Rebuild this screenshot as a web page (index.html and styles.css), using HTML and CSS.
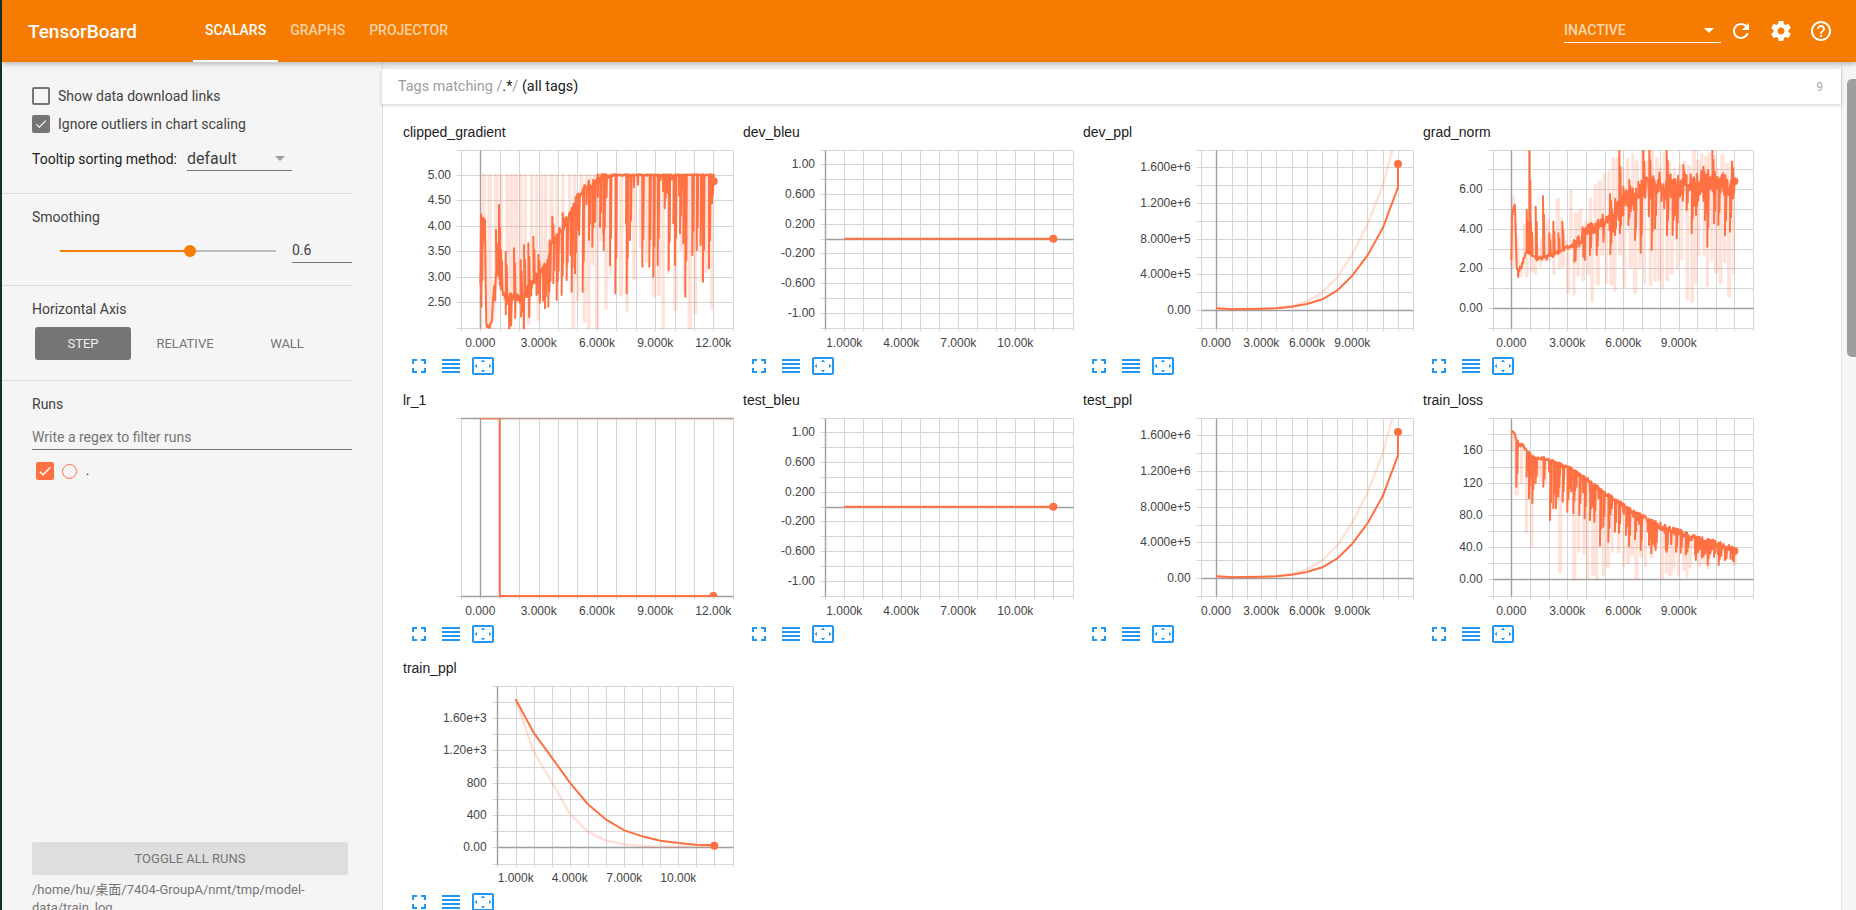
FILE: index.html
```html
<!DOCTYPE html>
<html lang="en">
<head>
<meta charset="utf-8">
<title>TensorBoard</title>
<link rel="stylesheet" href="styles.css">
</head>
<body>
<header class="topbar">
  <div class="logo">TensorBoard</div>
  <nav class="tabs">
    <div class="tab active">SCALARS</div>
    <div class="tab">GRAPHS</div>
    <div class="tab">PROJECTOR</div>
  </nav>
  <div class="topbar-right">
    <div class="inactive"><span>INACTIVE</span><i class="tri tri-white"></i></div>
    <svg class="ico-white" viewBox="0 0 24 24"><path d="M17.65 6.35C16.2 4.9 14.21 4 12 4c-4.42 0-7.99 3.58-7.99 8s3.57 8 7.99 8c3.73 0 6.84-2.55 7.73-6h-2.08c-.82 2.33-3.04 4-5.65 4-3.31 0-6-2.69-6-6s2.69-6 6-6c1.66 0 3.14.69 4.22 1.78L13 11h7V4l-2.35 2.35z"/></svg>
    <svg class="ico-white" viewBox="0 0 24 24"><path d="M19.43 12.98c.04-.32.07-.64.07-.98s-.03-.66-.07-.98l2.11-1.65c.19-.15.24-.42.12-.64l-2-3.46c-.12-.22-.39-.3-.61-.22l-2.49 1c-.52-.4-1.08-.73-1.69-.98l-.38-2.65C14.46 2.18 14.25 2 14 2h-4c-.25 0-.46.18-.49.42l-.38 2.65c-.61.25-1.17.59-1.69.98l-2.49-1c-.23-.09-.49 0-.61.22l-2 3.46c-.13.22-.07.49.12.64l2.11 1.65c-.04.32-.07.65-.07.98s.03.66.07.98l-2.11 1.65c-.19.15-.24.42-.12.64l2 3.46c.12.22.39.3.61.22l2.49-1c.52.4 1.08.73 1.69.98l.38 2.65c.03.24.24.42.49.42h4c.25 0 .46-.18.49-.42l.38-2.65c.61-.25 1.17-.59 1.69-.98l2.49 1c.23.09.49 0 .61-.22l2-3.46c.12-.22.07-.49-.12-.64l-2.11-1.65zM12 15.5c-1.93 0-3.5-1.57-3.5-3.5s1.57-3.5 3.5-3.5 3.5 1.57 3.5 3.5-1.57 3.5-3.5 3.5z"/></svg>
    <svg class="ico-white" viewBox="0 0 24 24"><path d="M11 18h2v-2h-2v2zm1-16C6.48 2 2 6.48 2 12s4.48 10 10 10 10-4.48 10-10S17.52 2 12 2zm0 18c-4.41 0-8-3.59-8-8s3.59-8 8-8 8 3.59 8 8-3.59 8-8 8zm0-14c-2.21 0-4 1.79-4 4h2c0-1.1.9-2 2-2s2 .9 2 2c0 2-3 1.75-3 5h2c0-2.25 3-2.5 3-5 0-2.21-1.79-4-4-4z"/></svg>
  </div>
</header>
<div class="layout">
  <aside class="sidebar">
    <section class="sec sec-options">
      <label class="check-row"><span class="box"></span>Show data download links</label>
      <label class="check-row"><span class="box box-on"><svg viewBox="0 0 24 24"><path d="M9 16.2L4.8 12l-1.4 1.4L9 19 21 7l-1.4-1.4L9 16.2z"/></svg></span>Ignore outliers in chart scaling</label>
      <div class="sort-row">
        <span class="sort-label">Tooltip sorting method:</span>
        <div class="sort-select"><span>default</span><i class="tri tri-grey"></i></div>
      </div>
    </section>
    <section class="sec sec-smooth">
      <div class="sec-title">Smoothing</div>
      <div class="slider-row">
        <div class="slider"><div class="slider-fill"></div><div class="slider-rest"></div><div class="slider-thumb"></div></div>
        <div class="slider-value">0.6</div>
      </div>
    </section>
    <section class="sec sec-axis">
      <div class="sec-title">Horizontal Axis</div>
      <div class="axis-btns">
        <div class="axis-btn axis-on">STEP</div>
        <div class="axis-btn">RELATIVE</div>
        <div class="axis-btn">WALL</div>
      </div>
    </section>
    <section class="sec-runs">
      <div class="sec-title">Runs</div>
      <div class="regex">Write a regex to filter runs</div>
      <div class="run-row">
        <span class="run-box"><svg viewBox="0 0 24 24"><path d="M9 16.2L4.8 12l-1.4 1.4L9 19 21 7l-1.4-1.4L9 16.2z"/></svg></span>
        <span class="run-circle"></span>
        <span class="run-name">.</span>
      </div>
    </section>
    <section class="sec-bottom">
      <div class="toggle">TOGGLE ALL RUNS</div>
      <div class="logdir">/home/hu/桌面/7404-GroupA/nmt/tmp/model-data/train_log</div>
    </section>
  </aside>
  <main class="main">
    <div class="tagbar">
      <div class="tagtext"><span class="muted">Tags matching /</span>.*<span class="muted">/</span> (all tags)</div>
      <div class="tagcount">9</div>
    </div>
    <div class="charts" id="charts"></div>
  </main>
  <div class="scrolltrack"><div class="scrollthumb"></div></div>
</div>
<script src="charts.js"></script>
</body>
</html>
```
FILE: styles.css
```css
* { box-sizing: border-box; }
html, body { margin: 0; height: 910px; overflow: hidden; }
body {
  padding-left: 2px;
  background: #12352a;
  font-family: Roboto, "Noto Sans CJK SC", sans-serif;
  font-size: 14px;
  color: #424242;
}
.topbar {
  position: relative;
  z-index: 3;
  display: flex;
  align-items: center;
  height: 62px;
  background: #f57c00;
  color: #fff;
  box-shadow: 0 2px 5px rgba(0, 0, 0, .26);
}
.logo { width: 191px; padding-left: 26px; font-size: 19px; font-weight: 500; }
.tabs { display: flex; align-self: stretch; }
.tab {
  display: flex;
  align-items: center;
  padding: 0 12px;
  border-bottom: 2px solid transparent;
  font-weight: 500;
  color: rgba(255, 255, 255, .66);
}
.tab.active { color: #fff; border-bottom-color: #fff; }
.topbar-right { display: flex; align-items: center; margin-left: auto; padding-right: 23px; }
.inactive {
  display: flex;
  align-items: center;
  justify-content: space-between;
  width: 157px;
  height: 24px;
  margin-right: 8px;
  padding: 0 7px 1px 0;
  border-bottom: 1px solid #fff;
  font-weight: 500;
  color: rgba(255, 255, 255, .7);
}
.ico-white { width: 24px; height: 24px; margin-right: 16px; fill: #fff; }
.ico-white:last-child { margin-right: 0; }
.tri { width: 0; height: 0; border-left: 5px solid transparent; border-right: 5px solid transparent; }
.tri-white { border-top: 5px solid #fff; }
.tri-grey { border-top: 5px solid #9e9e9e; }

.layout { display: flex; height: 848px; }
.sidebar {
  display: flex;
  flex-direction: column;
  flex: 0 0 380px;
  height: 848px;
  overflow: hidden;
  padding-left: 30px;
  background: #f5f5f5;
}
.sec { margin-left: -30px; margin-right: 30px; padding-left: 30px; border-bottom: 1px solid #dcdcdc; }
.sec-options { height: 132px; padding-top: 25px; }
.check-row { display: flex; align-items: center; height: 18px; margin-bottom: 10px; gap: 8px; }
.box { width: 18px; height: 18px; border: 2px solid #757575; border-radius: 2px; flex: none; }
.box-on { background: #757575; display: flex; }
.box svg { width: 14px; height: 14px; fill: #fff; }
.sort-row { display: flex; align-items: flex-end; height: 28px; }
.sort-label { width: 155px; color: #212121; padding-bottom: 4px; }
.sort-select {
  display: flex;
  align-items: center;
  justify-content: space-between;
  width: 105px;
  height: 28px;
  padding: 3px 7px 0 0;
  border-bottom: 1px solid #757575;
  font-size: 16px;
}
.sec-title { height: 20px; line-height: 20px; color: #424242; }
.sec-smooth { height: 92px; padding-top: 13px; }
.slider-row { display: flex; align-items: center; height: 25px; margin-top: 11px; }
.slider { position: relative; display: flex; width: 216px; margin-left: 28px; margin-right: 16px; }
.slider-fill { width: 130px; height: 2px; background: #f57c00; }
.slider-rest { flex: 1; height: 2px; background: #bdbdbd; }
.slider-thumb {
  position: absolute;
  left: 124px;
  top: -5px;
  width: 12px;
  height: 12px;
  border-radius: 50%;
  background: #f57c00;
}
.slider-value { width: 60px; height: 25px; line-height: 24px; border-bottom: 1px solid #757575; }
.sec-axis { height: 95px; padding-top: 13px; }
.axis-btns { display: flex; gap: 6px; margin: 8px 0 0 3px; }
.axis-btn {
  width: 96px;
  height: 33px;
  line-height: 33px;
  border-radius: 3px;
  text-align: center;
  font-size: 13px;
  color: #757575;
}
.axis-on { background: #757575; color: #eee; }
.sec-runs { flex: 1; padding-top: 13px; }
.regex { width: 320px; height: 36px; padding-top: 12px; line-height: 23px; border-bottom: 1px solid #757575; color: #757575; }
.run-row { display: flex; align-items: center; height: 18px; margin: 12px 0 0 4px; }
.run-box { display: flex; align-items: center; justify-content: center; width: 18px; height: 18px; border-radius: 2px; background: #ff7043; }
.run-box svg { width: 16px; height: 16px; fill: #fff; }
.run-circle { width: 15px; height: 15px; margin-left: 8px; border: 1.5px solid #ff7043; border-radius: 50%; }
.run-name { margin-left: 9px; font-size: 12px; color: #212121; }
.sec-bottom { flex: 0 0 68px; height: 68px; width: 320px; overflow: hidden; }
.toggle {
  width: 316px;
  height: 33px;
  line-height: 33px;
  border-radius: 2px;
  background: #dedede;
  text-align: center;
  font-size: 13px;
  color: #757575;
}
.logdir { width: 316px; margin-top: 6px; font-size: 13px; line-height: 18px; color: #757575; }

.main { flex: 1; min-width: 0; display: flex; flex-direction: column; padding-top: 7px; background: #f5f5f5; border-left: 1px solid #dcdcdc; }
.tagbar {
  position: relative;
  z-index: 1;
  display: flex;
  align-items: center;
  justify-content: space-between;
  height: 35px;
  margin-left: -1px;
  padding: 0 18px 0 16px;
  background: #fff;
  box-shadow: 0 1px 4px rgba(0, 0, 0, .2);
  color: #212121;
}
.tagtext { font-size: 14.4px; }
.muted { color: #9e9e9e; }
.tagcount { font-size: 12px; color: #aaa; }
.charts {
  flex: 1;
  display: grid;
  grid-template-columns: repeat(4, 340px);
  grid-auto-rows: 260px;
  row-gap: 8px;
  align-content: start;
  padding: 14px 0 0 10px;
  background: #fff;
  overflow: hidden;
}
.title { height: 28px; padding-left: 10px; line-height: 28px; font-family: "Liberation Sans", sans-serif; font-size: 14px; color: #212121; }
.plot { display: block; width: 340px; height: 208px; overflow: visible; }
.plot text { font-family: "Liberation Sans", sans-serif; font-size: 12px; fill: #444; dominant-baseline: central; }
.lab-y { text-anchor: end; }
.lab-x { text-anchor: middle; }
.grid { stroke: #d6d6d6; stroke-width: 1; }
.axis { stroke: #a0a0a0; stroke-width: 1.4; }
.series { fill: none; stroke: #ff7043; stroke-width: 2; stroke-linejoin: round; }
.series-light { fill: none; stroke: #ff7043; stroke-width: 2.5; stroke-linejoin: round; opacity: .2; }
.dot { fill: #ff7043; }
.tools { display: flex; gap: 8px; padding-left: 14px; height: 24px; }
.tools svg { width: 24px; height: 24px; fill: #2196f3; }

.scrolltrack { flex: 0 0 14px; padding: 17px 0 0 5px; background: #f5f5f5; border-left: 1px solid #e4e4e4; }
.scrollthumb { width: 9px; height: 278px; border-radius: 5px 0 0 5px; background: #9e9e9e; }
```
FILE: charts.js
```js
(function () {
  var seed = 12345;
  function rnd() {
    seed = (seed + 0x6D2B79F5) | 0;
    var t = Math.imul(seed ^ (seed >>> 15), 1 | seed);
    t = (t + Math.imul(t ^ (t >>> 7), 61 | t)) ^ t;
    return ((t ^ (t >>> 14)) >>> 0) / 4294967296;
  }
  function interp(k, x) {
    if (x <= k[0][0]) return k[0][1];
    for (var i = 1; i < k.length; i++) {
      if (x <= k[i][0]) {
        var a = k[i - 1], b = k[i];
        return a[1] + (b[1] - a[1]) * (x - a[0]) / (b[0] - a[0] || 1);
      }
    }
    return k[k.length - 1][1];
  }
  // noisy curve: base knots, hand-read spikes, per-step jitter and random dips
  function noisy(knots, spikes, jitter, dips, minY) {
    var pts = [], s = spikes.slice().sort(function (a, b) { return a[0] - b[0]; }), si = 0;
    var x0 = knots[0][0], x1 = knots[knots.length - 1][0];
    for (var x = x0; x <= x1; x += 2) {
      var base = interp(knots, x);
      var y = base + (rnd() - 0.5) * jitter(x);
      if (minY !== undefined && y < minY) y = minY;
      pts.push([x, y]);
      var d = dips(x);
      if (d && rnd() < d[0]) pts.push([x + 0.5, y + rnd() * d[1]]);
      while (si < s.length && s[si][0] <= x) {
        var sx = s[si][0], sy = s[si][1], b = interp(knots, sx);
        pts.push([sx, sy], [sx + 1.5, b], [sx + 3, sy + (b - sy) * 0.3], [sx + 4.5, b]);
        si++;
      }
    }
    return pts;
  }
  function lightSpikes(knots, gap, up, down) {
    var pts = [], x = knots[0][0], x1 = knots[knots.length - 1][0], flip = 0;
    while (x <= x1) {
      var b = interp(knots, x);
      pts.push([x, b]);
      var f = flip++ % 2 ? up : down;
      var v = f ? f(x, b) : null;
      if (v !== null) {
        var w = 1.5 + rnd() * 4.5;
        pts.push([x + 0.5, v], [x + w, v], [x + w + 0.5, b]);
      }
      x += gap[0] + rnd() * (gap[1] - gap[0]);
    }
    return pts;
  }

  var X_A = [213, 270, 329, 388, 446, 505, 562, 621, 679, 737, 796, 854, 912, 970, 1030];
  var X_B = [285, 343, 400, 457, 514, 571, 628, 685, 742, 799, 856, 913, 970, 1030];
  var X_C = [393, 438, 485, 530, 574, 619, 665, 711, 757, 801, 847, 892, 938, 984, 1030];
  var X_D = [250, 304, 361, 416, 472, 528, 584, 640, 695, 750, 806, 862, 917, 972, 1030];
  var X_E = [322, 377, 431, 485, 539, 593, 647, 703, 757, 811, 865, 919, 973, 1030];

  var BLEU = {
    vx: X_B, axisX: 285, hy: [120, 163, 208, 253, 298, 342, 386, 430, 475, 520, 565, 609, 655], axisY: 386,
    ylab: [['1.00', 163], ['0.600', 253], ['0.200', 342], ['-0.200', 430], ['-0.600', 520], ['-1.00', 609]], yr: 255,
    xlab: [['1.000k', 343], ['4.000k', 514], ['7.000k', 685], ['10.00k', 856]], xy: 698,
    dark: [[343, 386], [970, 386]], dot: [970, 386]
  };
  var PPL = {
    vx: X_C, axisX: 438, hy: [120, 172, 226, 280, 333, 387, 440, 493, 547, 600, 655], axisY: 600,
    ylab: [['1.600e+6', 172], ['1.200e+6', 280], ['8.000e+5', 387], ['4.000e+5', 493], ['0.00', 600]], yr: 362,
    xlab: [['0.000', 438], ['3.000k', 574], ['6.000k', 711], ['9.000k', 847]], xy: 698,
    light: [[438, 593], [485, 598], [530, 597], [574, 596], [619, 594], [665, 588], [711, 574], [757, 547], [801, 503], [847, 433], [892, 345], [938, 228], [967, 120]],
    dark: [[438, 595], [485, 598], [530, 597], [574, 596], [619, 595], [665, 590], [711, 582], [757, 568], [801, 542], [847, 497], [892, 437], [938, 355], [984, 232], [984, 162]],
    dot: [984, 162]
  };

  var cgBase = [[271, 500], [272, 320], [285, 340], [288, 640], [295, 655], [305, 630], [310, 560], [320, 480], [335, 540], [350, 565], [390, 570], [410, 540], [440, 500], [470, 470], [480, 400], [510, 370], [540, 310], [570, 250], [600, 225], [625, 205], [650, 195], [971, 195]];
  var cgSpikes = [[274, 590], [278, 410], [281, 325], [318, 360], [327, 285], [333, 420], [347, 425], [372, 415], [380, 570], [392, 450], [393, 620], [402, 405], [408, 560], [415, 400], [422, 540], [430, 380], [445, 435], [446, 550], [465, 595], [475, 590], [487, 320], [490, 520], [500, 570], [515, 555], [518, 310], [530, 510], [545, 545], [555, 490], [565, 360], [578, 545], [597, 390], [607, 410], [630, 350], [640, 370], [641, 420], [660, 465], [676, 550], [708, 340], [710, 550], [720, 390], [757, 470], [778, 470], [790, 500], [803, 465], [824, 295], [836, 480], [850, 340], [855, 465], [870, 370], [880, 400], [886, 560], [907, 435], [920, 420], [932, 405], [939, 515], [957, 475], [966, 280]];
  var gnBase = [[304, 450], [305, 320], [315, 280], [320, 470], [325, 490], [340, 450], [350, 420], [370, 435], [380, 445], [410, 440], [440, 430], [470, 415], [500, 400], [520, 370], [560, 345], [600, 320], [620, 295], [650, 275], [680, 260], [700, 235], [750, 220], [800, 230], [850, 220], [900, 215], [950, 225], [973, 214]];
  var gnSpikes = [[350, 300], [358, 120], [363, 340], [377, 290], [399, 258], [418, 370], [430, 335], [445, 370], [457, 335], [493, 455], [520, 440], [540, 435], [560, 435], [600, 253], [601, 432], [615, 375], [628, 120], [630, 370], [640, 230], [655, 345], [658, 210], [675, 390], [685, 215], [692, 428], [700, 120], [718, 120], [725, 420], [735, 355], [770, 120], [771, 375], [788, 375], [800, 385], [820, 165], [830, 300], [845, 370], [858, 315], [880, 170], [885, 330], [892, 410], [907, 120], [912, 340], [925, 345], [940, 190], [945, 375], [960, 365], [966, 155], [969, 265]];
  var tlBase = [[305, 155], [315, 165], [322, 195], [340, 195], [350, 215], [370, 232], [400, 237], [430, 245], [460, 258], [480, 262], [500, 280], [530, 298], [560, 320], [585, 340], [610, 355], [640, 375], [670, 397], [700, 410], [720, 425], [745, 435], [780, 450], [820, 462], [860, 478], [900, 487], [940, 498], [973, 513]];
  var tlSpikes = [[319, 320], [350, 290], [357, 355], [367, 370], [377, 310], [400, 320], [420, 420], [430, 385], [438, 385], [445, 350], [458, 365], [472, 395], [490, 400], [508, 405], [524, 415], [540, 420], [553, 425], [570, 497], [580, 440], [595, 485], [615, 455], [627, 458], [648, 465], [657, 498], [675, 478], [692, 510], [717, 495], [724, 520], [737, 510], [770, 515], [798, 515], [812, 518], [832, 515], [855, 522], [880, 528], [893, 555], [912, 530], [926, 555], [945, 540], [968, 540]];

  var specs = [
    { name: 'clipped_gradient', row: 1, vx: X_A, axisX: 270, hy: [120, 195, 271, 349, 424, 502, 577, 655],
      ylab: [['5.00', 195], ['4.50', 271], ['4.00', 349], ['3.50', 424], ['3.00', 502], ['2.50', 577]], yr: 183,
      xlab: [['0.000', 271], ['3.000k', 446], ['6.000k', 621], ['9.000k', 796], ['12.00k', 970]], xy: 698,
      light: lightSpikes(cgBase, [4, 11],
        function (x) { return x < 640 ? 195 : null; },
        function (x, b) { return x < 971 ? 380 + rnd() * 290 : b; }),
      dark: noisy(cgBase, cgSpikes,
        function (x) { return x < 350 ? 20 : x < 650 ? 34 : 6; },
        function (x) { return x < 350 ? [0.1, 50] : x < 650 ? [0.28, 140] : [0.07, 70]; }, 193).concat([[971, 214]]),
      dot: [971, 214] },
    Object.assign({ name: 'dev_bleu', row: 1 }, BLEU),
    Object.assign({ name: 'dev_ppl', row: 1 }, PPL),
    { name: 'grad_norm', row: 1, vx: X_D, axisX: 304, hy: [120, 178, 238, 297, 357, 416, 475, 535, 595, 655], axisY: 595,
      ylab: [['6.00', 238], ['4.00', 357], ['2.00', 475], ['0.00', 595]], yr: 218,
      xlab: [['0.000', 304], ['3.000k', 472], ['6.000k', 640], ['9.000k', 806]], xy: 698,
      light: lightSpikes(gnBase, [4, 10],
        function (x, b) { return x > 600 ? 120 + rnd() * 60 : b - rnd() * 170; },
        function (x, b) { return x < 470 ? b + rnd() * 80 : 430 + rnd() * 150; }),
      dark: noisy(gnBase, gnSpikes,
        function (x) { return x < 490 ? 14 : x < 600 ? 44 : 70; },
        function (x) { return x < 490 ? [0.04, 30] : [0.2, 90]; }),
      dot: [973, 214] },
    { name: 'lr_1', row: 2, vx: X_A, axisX: 270, hy: [115, 648], axisY: 115, axisY2: 648,
      ylab: [], yr: 183,
      xlab: [['0.000', 271], ['3.000k', 446], ['6.000k', 621], ['9.000k', 796], ['12.00k', 970]], xy: 692,
      light: [[270, 115], [1030, 115]],
      dark: [[270, 115], [329, 115], [329, 648], [970, 648]], dot: [970, 648], clipDot: true },
    Object.assign({ name: 'test_bleu', row: 1 }, BLEU),
    Object.assign({ name: 'test_ppl', row: 1 }, PPL),
    { name: 'train_loss', row: 2, vx: X_D, axisX: 304, hy: [115, 162, 211, 260, 308, 356, 405, 454, 502, 550, 598, 648], axisY: 598,
      ylab: [['160', 211], ['120', 308], ['80.0', 405], ['40.0', 502], ['0.00', 598]], yr: 218,
      xlab: [['0.000', 304], ['3.000k', 472], ['6.000k', 640], ['9.000k', 806]], xy: 692,
      light: lightSpikes(tlBase, [4, 10], null,
        function (x, b) { return x < 480 ? b + rnd() * 330 : 500 + rnd() * 100; }),
      dark: noisy(tlBase, tlSpikes,
        function (x) { return x < 700 ? 12 : 22; },
        function (x) { return x < 400 ? [0.04, 30] : x < 860 ? [0.2, 70] : [0.3, 50]; }),
      dot: [973, 513] },
    { name: 'train_ppl', row: 3, vx: X_E, axisX: 322, hy: [107, 156, 205, 253, 301, 350, 398, 447, 496, 544, 592, 643], axisY: 592,
      ylab: [['1.60e+3', 205], ['1.20e+3', 301], ['800', 398], ['400', 496], ['0.00', 592]], yr: 290,
      xlab: [['1.000k', 377], ['4.000k', 539], ['7.000k', 703], ['10.00k', 865]], xy: 685,
      light: [[377, 150], [431, 305], [485, 395], [539, 490], [593, 545], [647, 572], [703, 583], [757, 588], [811, 590], [865, 590], [919, 590], [973, 590]],
      dark: [[377, 148], [431, 248], [485, 322], [539, 397], [593, 462], [647, 508], [703, 541], [757, 559], [811, 572], [865, 579], [919, 584], [973, 586]],
      dot: [973, 587] }
  ];

  var OFF = { 1: 36, 2: 34, 3: 32 };
  var NS = 'http://www.w3.org/2000/svg';
  function el(parent, tag, attrs, text) {
    var e = document.createElementNS(NS, tag);
    for (var k in attrs) e.setAttribute(k, attrs[k]);
    if (text !== undefined) e.textContent = text;
    parent.appendChild(e);
    return e;
  }
  var ICONS = [
    'M7 14H5v5h5v-2H7v-3zm-2-4h2V7h3V5H5v5zm12 7h-3v2h5v-5h-2v3zM14 5v2h3v3h2V5h-5z',
    'M3 15h18v-2H3v2zm0 4h18v-2H3v2zm0-8h18V9H3v2zm0-6v2h18V5H3z',
    'M12.01 5.5L10 8h4l-1.99-2.5zM18 10v4l2.5-1.99L18 10zM6 10l-2.5 2.01L6 14v-4zm8 6h-4l2.01 2.5L14 16zm7-13H3c-1.1 0-2 .9-2 2v14c0 1.1.9 2 2 2h18c1.1 0 2-.9 2-2V5c0-1.1-.9-2-2-2zm0 16.01H3V4.99h18v14.02z'
  ];

  var host = document.getElementById('charts');
  specs.forEach(function (s, idx) {
    var off = OFF[s.row];
    var X = function (v) { return v / 3 - 3; };
    var Y = function (v) { return v / 3 - off; };
    var SX = function (v) { return Math.round(X(v)) + 0.5; };
    var SY = function (v) { return Math.round(Y(v)) + 0.5; };
    var top = Math.min.apply(null, s.hy), bottom = Math.max.apply(null, s.hy);
    var left = s.vx[0], right = 1030;

    var card = document.createElement('div');
    card.className = 'card';
    var title = document.createElement('div');
    title.className = 'title';
    title.textContent = s.name;
    card.appendChild(title);

    var svg = el(card, 'svg', { 'class': 'plot', viewBox: '0 0 340 208' });
    var clipId = 'clip' + idx;
    var cp = el(el(svg, 'defs', {}), 'clipPath', { id: clipId });
    el(cp, 'rect', { x: X(left), y: Y(top), width: X(right) - X(left) + 1, height: Y(bottom) - Y(top) + 1 });

    s.hy.forEach(function (v) {
      el(svg, 'line', { 'class': 'grid', x1: SX(left) - 5, x2: SX(right), y1: SY(v), y2: SY(v) });
    });
    s.vx.forEach(function (v) {
      el(svg, 'line', { 'class': 'grid', x1: SX(v), x2: SX(v), y1: SY(top), y2: SY(bottom) + 3 });
    });
    if (s.axisX) el(svg, 'line', { 'class': 'axis', x1: SX(s.axisX), x2: SX(s.axisX), y1: SY(top), y2: SY(bottom) });
    if (s.axisY) el(svg, 'line', { 'class': 'axis', x1: SX(left), x2: SX(right), y1: SY(s.axisY), y2: SY(s.axisY) });
    if (s.axisY2) el(svg, 'line', { 'class': 'axis', x1: SX(left), x2: SX(right), y1: SY(s.axisY2), y2: SY(s.axisY2) });

    s.ylab.forEach(function (l) {
      el(svg, 'text', { 'class': 'lab-y', x: X(s.yr), y: Y(l[1]) }, l[0]);
    });
    s.xlab.forEach(function (l) {
      el(svg, 'text', { 'class': 'lab-x', x: X(l[1]), y: Y(s.xy) }, l[0]);
    });

    var g = el(svg, 'g', { 'clip-path': 'url(#' + clipId + ')' });
    function poly(pts, cls) {
      el(g, 'polyline', { 'class': cls, points: pts.map(function (p) { return X(p[0]).toFixed(2) + ',' + Y(p[1]).toFixed(2); }).join(' ') });
    }
    if (s.light) poly(s.light, 'series-light');
    poly(s.dark, 'series');
    el(s.clipDot ? g : svg, 'circle', { 'class': 'dot', cx: X(s.dot[0]), cy: Y(s.dot[1]), r: 4 });

    var tools = document.createElement('div');
    tools.className = 'tools';
    tools.innerHTML = ICONS.map(function (d) {
      return '<svg viewBox="0 0 24 24"><path d="' + d + '"/></svg>';
    }).join('');
    card.appendChild(tools);
    host.appendChild(card);
  });
})();
```
